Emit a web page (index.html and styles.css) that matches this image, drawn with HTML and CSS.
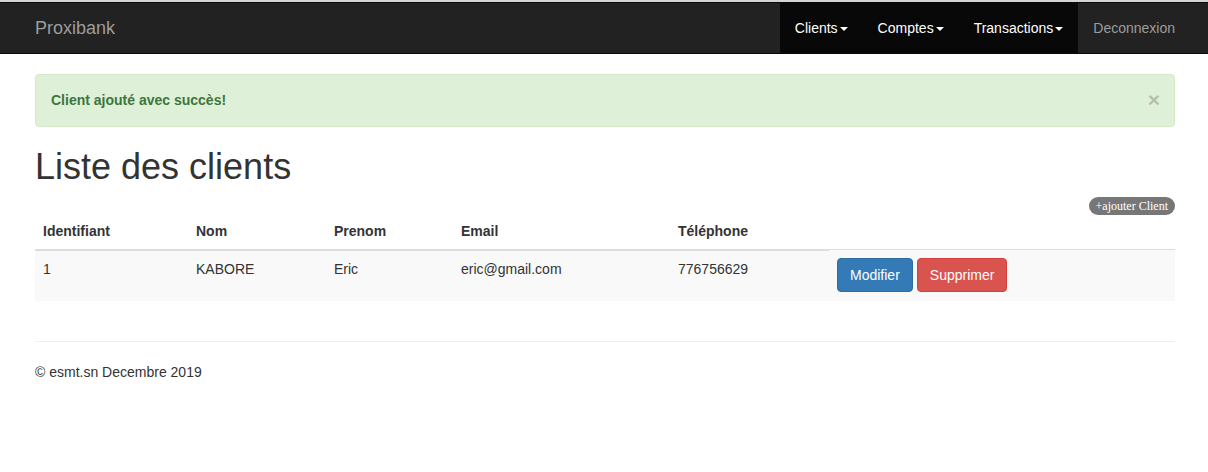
FILE: index.html
```html
<!DOCTYPE html>
<html lang="fr">
<head>
<meta charset="utf-8">
<title>Proxibank</title>
<link rel="stylesheet" href="styles.css">
</head>
<body>
<nav class="navbar">
  <div class="container nav-inner">
    <a class="brand" href="#">Proxibank</a>
    <ul class="nav-right">
      <li class="dark"><a href="#">Clients<span class="caret"></span></a></li>
      <li class="dark"><a href="#">Comptes<span class="caret"></span></a></li>
      <li class="dark"><a href="#">Transactions<span class="caret"></span></a></li>
      <li><a class="muted" href="#">Deconnexion</a></li>
    </ul>
  </div>
</nav>

<main class="container">
  <div class="alert">
    <strong>Client ajouté avec succès!</strong>
    <span class="close">×</span>
  </div>

  <h1 class="title">Liste des clients</h1>

  <div class="toolbar">
    <a class="badge" href="#">+ajouter Client</a>
  </div>

  <table class="table">
    <thead>
      <tr>
        <th class="c1">Identifiant</th>
        <th class="c2">Nom</th>
        <th class="c3">Prenom</th>
        <th class="c4">Email</th>
        <th class="c5">Téléphone</th>
      </tr>
    </thead>
    <tbody>
      <tr>
        <td>1</td>
        <td>KABORE</td>
        <td>Eric</td>
        <td>eric@gmail.com</td>
        <td>776756629</td>
        <td>
          <div class="actions">
            <a class="btn btn-primary" href="#">Modifier</a>
            <a class="btn btn-danger" href="#">Supprimer</a>
          </div>
        </td>
      </tr>
    </tbody>
  </table>

  <hr class="rule">
  <footer class="footer">© esmt.sn Decembre 2019</footer>
</main>
</body>
</html>
```

FILE: styles.css
```css
* { box-sizing: border-box; }

html, body {
  margin: 0;
  background: #fff;
}

body {
  font-family: "Liberation Sans", Arial, Helvetica, sans-serif;
  font-size: 14px;
  line-height: 20px;
  color: #333;
  border-top: 2px solid #d4d4d4;
}

a { text-decoration: none; }

.container {
  width: 1140px;
  margin-left: 35px;
}

/* Navbar */
.navbar {
  background: #222;
  border-top: 1px solid #080808;
  border-bottom: 1px solid #080808;
  height: 52px;
  margin-bottom: 20px;
}

.nav-inner {
  display: flex;
  justify-content: space-between;
  height: 50px;
}

.brand {
  color: #9d9d9d;
  font-size: 18px;
  line-height: 20px;
  padding: 15px 15px;
  margin-left: -15px;
  height: 50px;
}

.nav-right {
  list-style: none;
  margin: 0 -15px 0 0;
  padding: 0;
  display: flex;
}

.nav-right li a {
  display: block;
  padding: 15px 15px;
  line-height: 20px;
  color: #fff;
  height: 50px;
}

.nav-right li.dark a {
  background: #080808;
}

.nav-right li a.muted {
  color: #9d9d9d;
}

.caret {
  display: inline-block;
  width: 0;
  height: 0;
  margin-left: 2px;
  vertical-align: middle;
  border-top: 4px solid;
  border-right: 4px solid transparent;
  border-left: 4px solid transparent;
}

/* Alert */
.alert {
  display: flex;
  justify-content: space-between;
  align-items: flex-start;
  background: #dff0d8;
  border: 1px solid #d6e9c6;
  border-radius: 4px;
  color: #3c763d;
  padding: 15px 35px 15px 15px;
  margin-bottom: 20px;
}

.close {
  font-size: 21px;
  font-weight: bold;
  line-height: 1;
  color: #000;
  opacity: .2;
  position: relative;
  top: -1px;
  right: -21px;
  text-shadow: 0 1px 0 #fff;
}

/* Title */
.title {
  font-size: 36px;
  font-weight: 500;
  line-height: 1.1;
  margin: 20px 0 10px;
  color: #333;
}

.toolbar {
  display: flex;
  justify-content: flex-end;
  align-items: flex-start;
  height: 16px;
}

.badge {
  display: inline-block;
  font-family: "Liberation Serif", "Times New Roman", serif;
  font-size: 12px;
  line-height: 12px;
  padding: 3px 7px;
  background: #777;
  color: #fff;
  border-radius: 10px;
  white-space: nowrap;
}

/* Table */
.table {
  width: 100%;
  border-collapse: collapse;
  border-spacing: 0;
  margin-bottom: 20px;
}

.table th {
  text-align: left;
  font-weight: bold;
  padding: 8px;
  line-height: 20px;
  vertical-align: bottom;
  border-bottom: 2px solid #ddd;
}

.table td {
  padding: 8px 8px 9px;
  line-height: 20px;
  vertical-align: top;
  border-top: 1px solid #ddd;
}

.table tbody tr {
  background: #f9f9f9;
}

.c1 { width: 153px; }
.c2 { width: 138px; }
.c3 { width: 127px; }
.c4 { width: 217px; }
.c5 { width: 159px; }

.actions {
  display: flex;
  gap: 4px;
}

.btn {
  display: inline-block;
  padding: 6px 12px;
  font-size: 14px;
  line-height: 20px;
  border: 1px solid transparent;
  border-radius: 4px;
  color: #fff;
  white-space: nowrap;
}

.btn-primary {
  background: #337ab7;
  border-color: #2e6da4;
}

.btn-danger {
  background: #d9534f;
  border-color: #d43f3a;
}

/* Footer */
.rule {
  margin: 40px 0 20px;
  border: 0;
  border-top: 1px solid #eee;
}

.footer {
  margin: 0 0 10px;
  line-height: 20px;
}
```
